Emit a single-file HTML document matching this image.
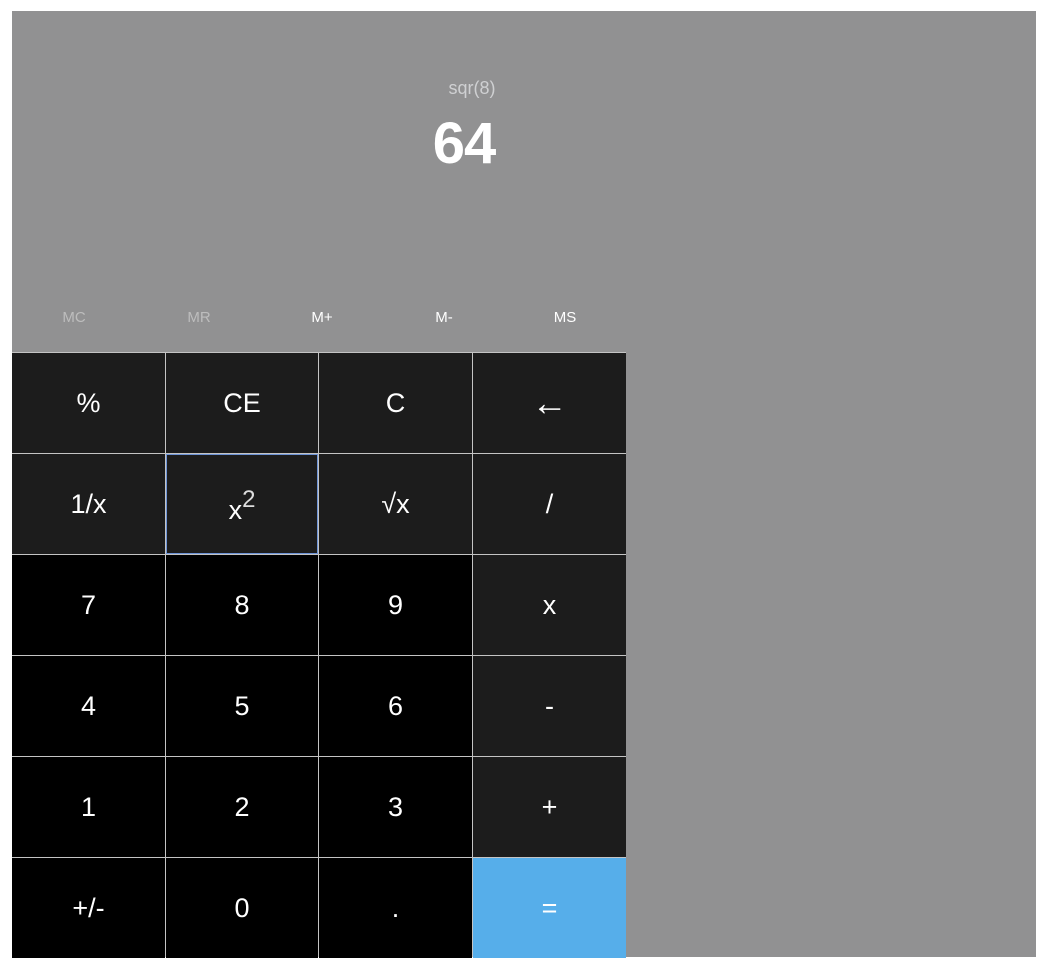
<!DOCTYPE html>
<html><head><meta charset="utf-8"><style>
html,body{margin:0;padding:0;background:#fff;width:1051px;height:967px;overflow:hidden;font-family:"Liberation Sans",sans-serif}
#calc{position:absolute;left:12px;top:11px;width:1024px;height:946px;background:#919192}
.hist{position:absolute;left:400px;width:144px;top:78px;text-align:center;color:#cfd0d2;font-size:18px}
.res{position:absolute;left:380px;width:168px;top:110px;text-align:center;color:#fff;font-size:58px;font-weight:bold;letter-spacing:-1px}
.mem{position:absolute;top:309px;font-size:15px;width:60px;text-align:center;margin-left:-30px}
.grid{position:absolute;left:12px;top:352px;width:614px;height:605px;background:#c4c4c4;display:grid;grid-template-columns:153px 152px 153px 153px;grid-template-rows:100px 100px 100px 100px 100px 100px;gap:1px;padding-top:1px;box-sizing:border-box}
.grid div{display:flex;align-items:center;justify-content:center;color:#fff;font-size:27px;background:#000;box-sizing:border-box}
.grid .d{background:#1c1c1c}
.grid .eq{background:#56aeea}
.grid .f{border:1px solid #6d93d6}
.arr{font-size:36px!important}
sup{font-size:24px;position:relative;top:-4px;color:#ddd}
</style></head><body>
<div id="calc"></div>
<div class="hist">sqr(8)</div>
<div class="res">64</div>
<div class="mem" style="left:74px;color:#bdbdbd">MC</div>
<div class="mem" style="left:199px;color:#bdbdbd">MR</div>
<div class="mem" style="left:322px;color:#fff">M+</div>
<div class="mem" style="left:444px;color:#fff">M-</div>
<div class="mem" style="left:565px;color:#fff">MS</div>
<div class="grid">
<div class="d">%</div><div class="d">CE</div><div class="d">C</div><div class="d arr">←</div>
<div class="d">1/x</div><div class="d f"><span style="position:relative;top:6px">x</span><sup>2</sup></div><div class="d">√x</div><div class="d">/</div>
<div>7</div><div>8</div><div>9</div><div class="d">x</div>
<div>4</div><div>5</div><div>6</div><div class="d">-</div>
<div>1</div><div>2</div><div>3</div><div class="d">+</div>
<div>+/-</div><div>0</div><div>.</div><div class="eq">=</div>
</div>
</body></html>
